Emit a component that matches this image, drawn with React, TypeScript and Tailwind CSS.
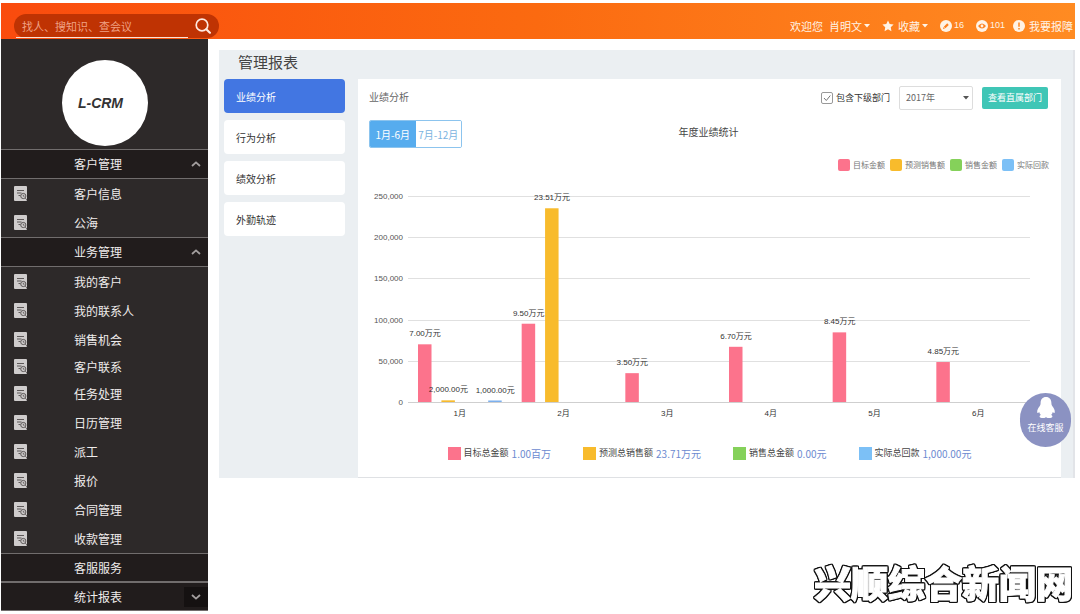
import { useState } from "react";

type MenuGroup = {
  title: string;
  arrow?: "up" | "down";
  items: string[];
};

type Bar = {
  month: number;
  slot: number;
  value: number;
  label: string;
};

const MENU: MenuGroup[] = [
  { title: "客户管理", arrow: "up", items: ["客户信息", "公海"] },
  {
    title: "业务管理",
    arrow: "up",
    items: [
      "我的客户",
      "我的联系人",
      "销售机会",
      "客户联系",
      "任务处理",
      "日历管理",
      "派工",
      "报价",
      "合同管理",
      "收款管理",
    ],
  },
  { title: "客服服务", items: [] },
  { title: "统计报表", arrow: "down", items: [] },
];

const REPORTS = ["业绩分析", "行为分析", "绩效分析", "外勤轨迹"];

const LEGEND = [
  { name: "目标金额", color: "bg-[#fc738c]" },
  { name: "预测销售额", color: "bg-[#f8bb2c]" },
  { name: "销售金额", color: "bg-[#85d15a]" },
  { name: "实际回款", color: "bg-[#7cc0f6]" },
];

const TOTALS = [
  { name: "目标总金额", value: "1.00百万", color: "bg-[#fc738c]" },
  { name: "预测总销售额", value: "23.71万元", color: "bg-[#f8bb2c]" },
  { name: "销售总金额", value: "0.00元", color: "bg-[#85d15a]" },
  { name: "实际总回款", value: "1,000.00元", color: "bg-[#7cc0f6]" },
];

const SERIES_COLORS = ["#fc738c", "#f8bb2c", "#85d15a", "#7cb0ee"];

const BARS: Bar[] = [
  { month: 0, slot: 0, value: 70000, label: "7.00万元" },
  { month: 0, slot: 1, value: 2000, label: "2,000.00元" },
  { month: 0, slot: 3, value: 1000, label: "1,000.00元" },
  { month: 1, slot: 0, value: 95000, label: "9.50万元" },
  { month: 1, slot: 1, value: 235100, label: "23.51万元" },
  { month: 2, slot: 0, value: 35000, label: "3.50万元" },
  { month: 3, slot: 0, value: 67000, label: "6.70万元" },
  { month: 4, slot: 0, value: 84500, label: "8.45万元" },
  { month: 5, slot: 0, value: 48500, label: "4.85万元" },
];

const TICKS = [250000, 200000, 150000, 100000, 50000, 0];

// chart geometry, in viewBox units
const LEFT = 50;
const RIGHT = 672;
const BASE = 226;
const PLOT = 206;
const STEP = (RIGHT - LEFT) / 6;

const yOf = (value: number) => BASE - (value / 250000) * PLOT;

function DocIcon() {
  return (
    <svg viewBox="0 0 13 15" className="h-[15px] w-[13px] shrink-0">
      <rect width="13" height="15" rx="1" fill="#cfcccc" />
      <path d="M3 4.5h7M3 7h4.5M4.5 9.5h2" stroke="#5d5858" strokeWidth="1" />
      <circle cx="9.3" cy="10" r="2.6" fill="#cfcccc" stroke="#5d5858" />
      <path d="M9.3 8.8v1.4h1.2M11.2 12l1.8 2" stroke="#5d5858" strokeWidth="0.9" fill="none" />
    </svg>
  );
}

function Caret({ className }: { className: string }) {
  return (
    <svg viewBox="0 0 6 4" className={`h-1 w-1.5 ${className}`}>
      <path d="M0 0h6L3 3.5z" fill="currentColor" />
    </svg>
  );
}

function Arrow({ dir }: { dir: "up" | "down" }) {
  return (
    <span
      className={`flex h-5 w-6 items-center justify-center ${dir === "down" ? "bg-[#151111]" : ""}`}
    >
      <svg viewBox="0 0 10 6" className="h-1.5 w-2.5" fill="none" stroke="#a39e9e" strokeWidth="1.8">
        <path d={dir === "up" ? "M1 5l4-3.6L9 5" : "M1 1l4 3.6L9 1"} />
      </svg>
    </span>
  );
}

function Header() {
  return (
    <header className="flex h-9 items-end justify-between bg-linear-to-r from-[#fa4b0e] via-[#fb6a10] via-50% to-[#ff8b22] pr-0.5 pb-px pl-[13px]">
      <form className="relative flex h-6 w-[205px] items-center rounded-full bg-[#bf3303] pr-2 pl-2">
        <input
          type="text"
          aria-label="搜索"
          placeholder="找人、搜知识、查会议"
          className="min-w-0 flex-1 bg-transparent text-[11px] text-white outline-none placeholder:text-[#f0a183]"
        />
        <button type="button" aria-label="搜索">
          <svg viewBox="0 0 16 16" className="h-4 w-4" fill="none" stroke="#ffe9df">
            <circle cx="7" cy="7" r="5.8" strokeWidth="1.7" />
            <path d="M11.3 11.3l3.6 3.4" strokeWidth="2.2" strokeLinecap="round" />
          </svg>
        </button>
        <span className="absolute bottom-0 left-0.5 h-px w-[172px] bg-[#fbe3d8]" />
      </form>

      <nav className="flex h-6 items-center gap-3 text-[11px] text-[#fff3e6]">
        <a href="#user" className="flex items-center">
          欢迎您
          <span className="ml-1.5">肖明文</span>
          <Caret className="ml-0.5" />
        </a>
        <a href="#favorites" className="flex items-center">
          <svg viewBox="0 0 24 24" className="mr-1 h-3 w-3" fill="currentColor">
            <path d="M12 1l3.4 7.1 7.8 1-5.7 5.4 1.4 7.8L12 18.500l-6.900 3.800 1.400-7.800L.8 9.100l7.800-1z" />
          </svg>
          收藏
          <Caret className="ml-0.5" />
        </a>
        <a href="#notes" className="flex items-center gap-0.5 font-['Liberation_Sans',sans-serif] text-[9px]">
          <svg viewBox="0 0 12 12" className="h-3 w-3">
            <circle cx="6" cy="6" r="6" fill="currentColor" />
            <path d="M4.600 7.500L8 4.100" stroke="#fd8120" strokeWidth="2.200" />
            <path d="M3 9l.5-2 1.500 1.500z" fill="#fd8120" />
          </svg>
          16
        </a>
        <a href="#views" className="flex items-center gap-0.5 font-['Liberation_Sans',sans-serif] text-[9px]">
          <svg viewBox="0 0 12 12" className="h-3 w-3">
            <circle cx="6" cy="6" r="6" fill="currentColor" />
            <path d="M2 6q4-5 8 0-4 5-8 0z" fill="#fd8320" />
            <circle cx="6" cy="6" r="1.400" fill="currentColor" />
          </svg>
          101
        </a>
        <a href="#report" className="-ml-1 flex items-center gap-1">
          <svg viewBox="0 0 12 12" className="h-3 w-3">
            <circle cx="6" cy="6" r="6" fill="currentColor" />
            <path d="M6 2.500v4.200M6 8v1.500" stroke="#fd8520" strokeWidth="1.500" />
          </svg>
          我要报障
        </a>
      </nav>
    </header>
  );
}

function Sidebar() {
  return (
    <aside className="w-[207px] shrink-0 bg-[#2d2929] text-xs text-[#efecec]">
      <div className="flex h-[110px] justify-center pt-[21px]">
        <div className="flex h-[86px] w-[86px] items-center justify-center rounded-full bg-white pr-2 font-['Liberation_Sans',sans-serif] text-sm font-bold text-[#333] italic">
          L-CRM
        </div>
      </div>
      {MENU.map((group) => (
        <div key={group.title}>
          <button
            type="button"
            className={`flex w-full items-center justify-between border-y border-[#716d6d] bg-[#211c1c] pl-[73px] ${group.items.length > 0 ? "h-[30px]" : "h-[29px]"}`}
          >
            {group.title}
            {group.arrow && <Arrow dir={group.arrow} />}
          </button>
          {group.items.map((item) => (
            <a
              key={item}
              href="#menu"
              className={`flex items-center gap-[47px] pl-[13px] ${item === "客户联系" ? "h-[25px]" : "h-[29px]"}`}
            >
              <DocIcon />
              {item}
            </a>
          ))}
        </div>
      ))}
    </aside>
  );
}

function Chart() {
  return (
    <svg
      viewBox="0 0 703 250"
      className="mt-1 block h-auto w-full font-['Liberation_Sans','Noto_Sans_CJK_SC',sans-serif] text-[8px]"
    >
      {TICKS.map((tick) => (
        <g key={tick}>
          <path
            d={`M${LEFT} ${Math.round(yOf(tick)) + 0.5}H${RIGHT}`}
            stroke={tick === 0 ? "#cfcfcf" : "#e0e0e0"}
          />
          <text x={45} y={yOf(tick) + 3} textAnchor="end" fill="#555">
            {tick.toLocaleString("en-US")}
          </text>
        </g>
      ))}
      {BARS.map((bar) => {
        const x = LEFT + bar.month * STEP + 10 + bar.slot * 23.4;
        // tiny values still get a visible sliver
        const y = Math.min(yOf(bar.value), BASE - 1.5);
        return (
          <g key={bar.label}>
            <rect x={x} y={y} width="13.5" height={BASE - y} fill={SERIES_COLORS[bar.slot]} />
            <text x={x + 7} y={y - 8} textAnchor="middle" fill="#333">
              {bar.label}
            </text>
          </g>
        );
      })}
      {[1, 2, 3, 4, 5, 6].map((month) => (
        <text key={month} x={LEFT + (month - 0.5) * STEP} y={240} textAnchor="middle" fill="#333">
          {month}月
        </text>
      ))}
    </svg>
  );
}

function ReportPanel() {
  const [half, setHalf] = useState(0);

  return (
    <div className="min-w-0 flex-1 border-b border-[#dfe1e4] bg-white pt-[7px] pb-4">
      <div className="flex h-6 items-center justify-between pr-[13px] pl-[11px]">
        <h2 className="pb-1 text-[10px] text-[#666]">业绩分析</h2>
        <div className="flex items-center gap-[9px] text-[9px]">
          <label className="relative flex items-center gap-[3px] text-[#333]">
            <input
              type="checkbox"
              defaultChecked
              className="peer h-3 w-3 appearance-none rounded-xs border border-[#999] bg-white"
            />
            <svg
              viewBox="0 0 12 12"
              className="pointer-events-none invisible absolute left-0 h-3 w-3 peer-checked:visible"
              fill="none"
              stroke="#777"
            >
              <path d="M3 6l2.300 2.500L9.300 3.500" />
            </svg>
            包含下级部门
          </label>
          <div className="relative flex items-center">
            <select
              aria-label="年份"
              className="h-6 w-[74px] appearance-none rounded-xs border border-[#ddd] bg-white pl-1.5 text-[9px] text-[#666]"
            >
              <option>2017年</option>
              <option>2016年</option>
            </select>
            <Caret className="pointer-events-none absolute right-1 text-[#555]" />
          </div>
          <button type="button" className="h-[22px] rounded-xs bg-[#3fc6b6] px-1.5 text-white">
            查看直属部门
          </button>
        </div>
      </div>

      <div className="mt-2.5 grid h-7 grid-cols-3 pr-[13px] pl-[11px]">
        <div className="flex h-7 w-[93px] overflow-hidden rounded-xs border border-[#8cc4ee] text-[10px]">
          {["1月-6月", "7月-12月"].map((label, idx) => (
            <button
              key={label}
              type="button"
              onClick={() => setHalf(idx)}
              className={`flex-1 whitespace-nowrap ${half === idx ? "bg-[#56acee] text-white" : "bg-white text-[#7ab3e0]"}`}
            >
              {label}
            </button>
          ))}
        </div>
        <h3 className="text-center text-[10px] leading-6 text-[#444]">年度业绩统计</h3>
      </div>

      <ul className="mt-2.5 flex h-3.5 items-center justify-end gap-[5px] pr-3 text-[8px] text-[#777]">
        {LEGEND.map((entry) => (
          <li key={entry.name} className="flex items-center gap-[3px]">
            <span className={`h-3 w-3 rounded-xs ${entry.color}`} />
            {entry.name}
          </li>
        ))}
      </ul>

      <Chart />

      <ul className="mt-[19px] flex h-4 items-center justify-center gap-8 text-[9px] text-[#444]">
        {TOTALS.map((total) => (
          <li key={total.name} className="flex items-center gap-[3px] whitespace-nowrap">
            <span className={`h-[13px] w-[13px] ${total.color}`} />
            {total.name}
            <span className="text-[10px] text-[#6c8ad0]">{total.value}</span>
          </li>
        ))}
      </ul>
    </div>
  );
}

export default function App() {
  return (
    <div className="relative min-h-screen bg-white pt-[3px] pr-[5px] pl-px font-['Noto_Sans_CJK_SC',sans-serif]">
      <Header />
      <div className="flex items-start gap-[11px]">
        <Sidebar />
        <main className="relative mt-[11px] min-w-0 flex-1 border-r-2 border-[#e2e4e8] bg-[#ebeff2]">
          <h1 className="flex h-[29px] items-center pb-1 pl-[19px] text-[15px] text-[#444]">
            管理报表
          </h1>
          <div className="flex gap-[13px] pr-3 pl-[5px]">
            <nav className="flex w-[121px] shrink-0 flex-col gap-[7px] text-[10px]">
              {REPORTS.map((name, idx) => (
                <a
                  key={name}
                  href="#report"
                  className={`flex h-[34px] items-center rounded-sm pl-3 ${idx === 0 ? "bg-[#4276e2] text-white" : "bg-white text-[#333]"}`}
                >
                  {name}
                </a>
              ))}
            </nav>
            <ReportPanel />
          </div>

          {/* floating customer service entry */}
          <button
            type="button"
            className="absolute right-0.5 bottom-[31px] flex h-[54px] w-[51px] flex-col items-center gap-0.5 rounded-full bg-[#8b92c2] pt-1 text-[9px] text-white"
          >
            <svg viewBox="0 0 20 22" className="h-[22px] w-5" fill="currentColor">
              <path d="M10 0C6.500 0 4.600 2.600 4.600 6c0 1.400-.3 2.200-1 3.300C2.400 11 1 13 1.200 15.300c.1 1.200 1 1 2-.3.300 1.300.9 2.300 1.700 3.100-1 .4-1.400 1-1.300 1.700.3 1.400 4.600 1.700 6.400.4 1.800 1.300 6.100 1 6.400-.4.100-.7-.3-1.300-1.300-1.700.8-.8 1.400-1.800 1.700-3.100 1 1.300 1.900 1.500 2 .3.200-2.300-1.200-4.300-2.400-6-.7-1.100-1-1.900-1-3.300C15.400 2.600 13.500 0 10 0z" />
            </svg>
            在线客服
          </button>
        </main>
      </div>

      <p className="absolute right-[7px] bottom-[7px] text-[37px] leading-[50px] font-black text-white [-webkit-text-stroke:1px_white] [filter:drop-shadow(1px_0_#111)_drop-shadow(-1px_0_#111)_drop-shadow(0_1px_#111)_drop-shadow(0_-1px_#111)]">
        兴顺综合新闻网
      </p>
    </div>
  );
}
